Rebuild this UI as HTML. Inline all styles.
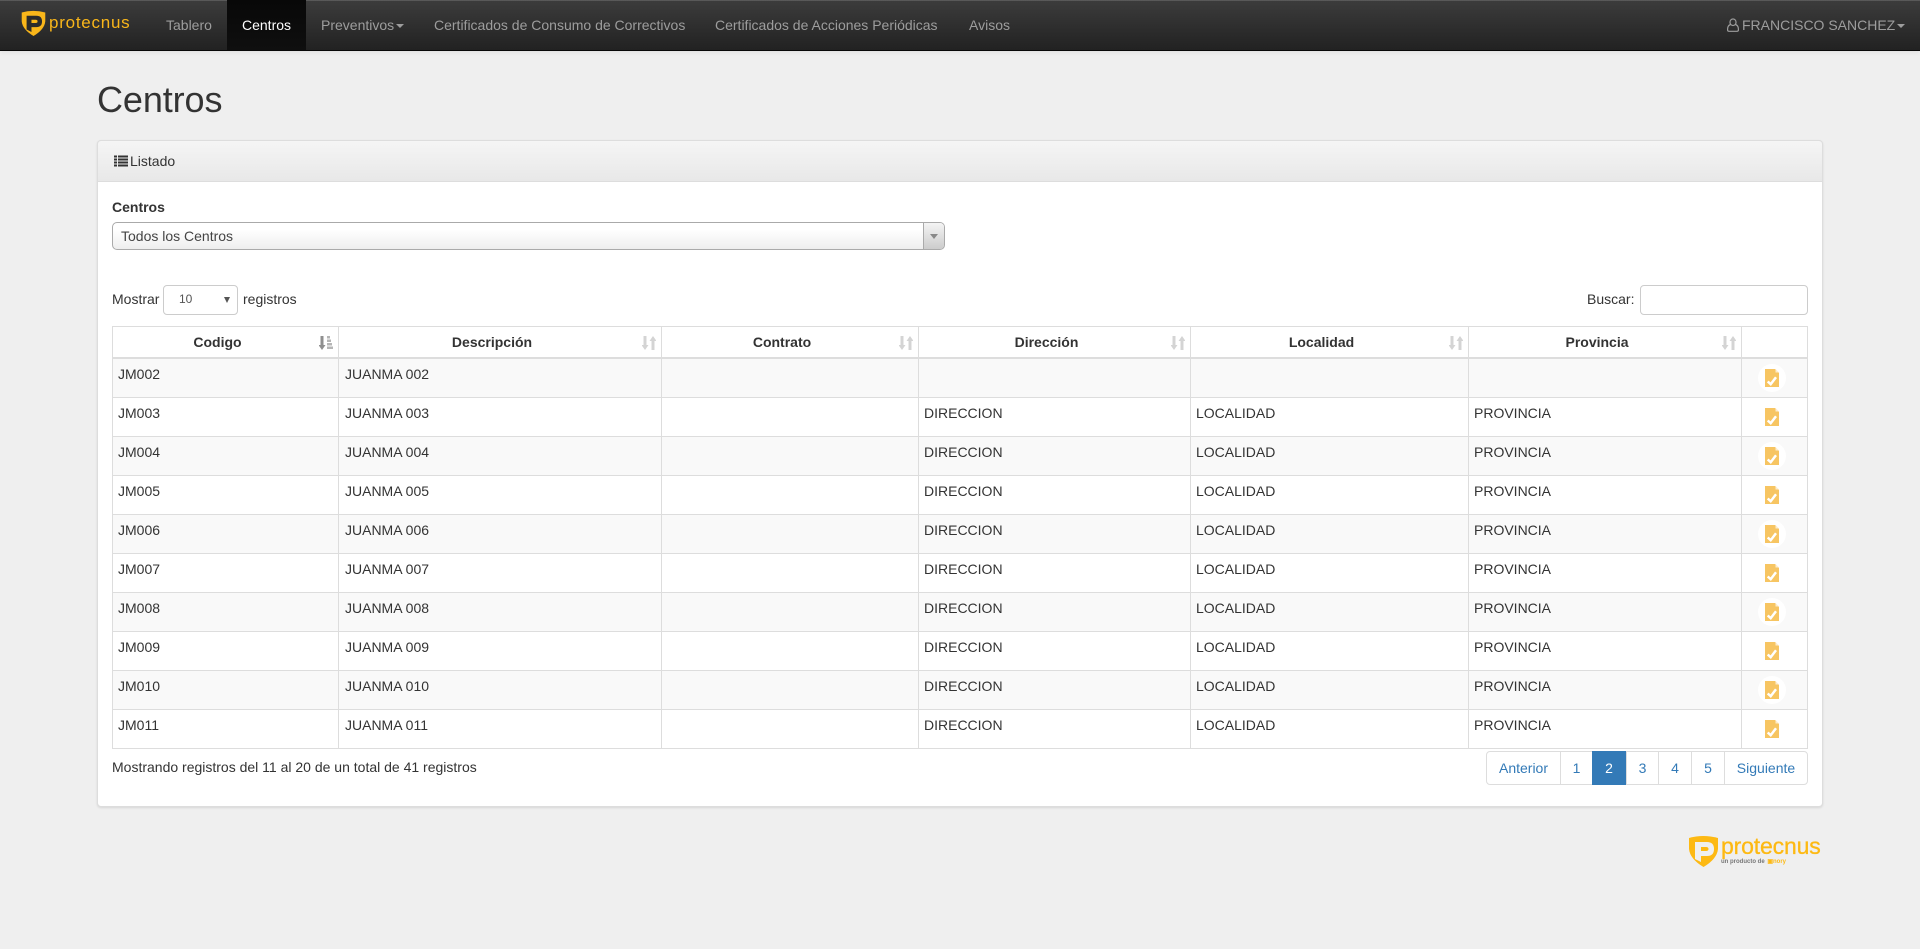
<!DOCTYPE html>
<html lang="es"><head><meta charset="utf-8"><title>Centros</title>
<style>
*{box-sizing:border-box}
html,body{margin:0;padding:0}
body{width:1920px;height:949px;overflow:hidden;background:#efefef;font:14px/20px "Liberation Sans",sans-serif;color:#333;position:relative}
.abs{position:absolute}
nav{position:absolute;left:0;top:0;width:1920px;height:51px;background:linear-gradient(#3c3c3c,#222);border-bottom:1px solid #080808;box-shadow:inset 0 1px 0 rgba(255,255,255,.15),0 1px 5px rgba(0,0,0,.075)}
nav span.i{position:absolute;top:15px;color:#9d9d9d;white-space:nowrap}
.active{position:absolute;left:227px;top:0;width:79px;height:50px;background:linear-gradient(#080808,#0f0f0f)}
.caret{position:absolute;width:0;height:0;border-top:4px solid #9d9d9d;border-left:4px solid transparent;border-right:4px solid transparent}
.brand{position:absolute;font-family:"Liberation Sans",sans-serif;color:#f9b61a;white-space:nowrap}
h1{position:absolute;left:97px;top:80px;margin:0;font-size:36px;line-height:40px;font-weight:500;color:#333;letter-spacing:-.1px}
.panel{position:absolute;left:97px;top:140px;width:1726px;height:667px;background:#fff;border:1px solid #ddd;border-radius:4px;box-shadow:0 1px 2px rgba(0,0,0,.1)}
.ph{position:absolute;left:97px;top:140px;width:1726px;height:42px;background:linear-gradient(#f5f5f5,#e8e8e8);border:1px solid #ddd;border-radius:4px 4px 0 0}
.chosen{position:absolute;left:112px;top:222px;width:833px;height:28px;border:1px solid #aaa;border-radius:5px;background:linear-gradient(#fff 25%,#eee);padding:3px 0 0 8px;color:#444}
.chosen i{position:absolute;right:0;top:0;width:21px;height:26px;border-left:1px solid #aaa;background:linear-gradient(#f4f4f4,#ccc);border-radius:0 4px 4px 0}
.chosen i:after{content:"";position:absolute;left:6px;top:11px;border-top:5px solid #888;border-left:4px solid transparent;border-right:4px solid transparent}
.box{position:absolute;height:30px;background:#fff;border:1px solid #ccc;border-radius:4px}
table{position:absolute;left:112px;top:326px;width:1695px;table-layout:fixed;border-collapse:collapse;background:#fff}
th,td{border:1px solid #ddd;padding:5px;vertical-align:top;text-align:left}
th{position:relative;height:31px;font-weight:700;text-align:center;padding:5px 21px 5px 5px;border-bottom:2px solid #ddd;line-height:20px}
td{height:39px}
td:nth-child(2){padding-left:6px}
tr:nth-child(odd) td{background:#f9f9f9}
th svg{position:absolute;right:5px;top:9px}
td .c{display:block;width:28px;height:28px;border-radius:50%;background:#fff;margin:0 0 0 11px;position:relative}
td .c svg{position:absolute;left:7px;top:5px}
.pg{position:absolute;top:751px;height:34px;border:1px solid #ddd;background:#fff;color:#337ab7;text-align:center;line-height:32px}
.pg.on{background:#337ab7;border-color:#337ab7;color:#fff}
</style></head><body>

<nav>
<div class="active"></div>
<svg class="abs" style="left:21px;top:10px" width="25" height="26" viewBox="0 0 29 32"><path fill="#f9b61a" d="M0 3Q14-1 29 3V14Q28 24 14.5 32 1 24 0 14Z"/><path fill="#2b2b2b" d="M6 7H18Q25 7 25 14 25 21 18 21H12V27L6 24Z"/><path fill="#f9b61a" d="M12 12H17Q19.500 12 19.500 14 19.500 16 17 16H12Z"/></svg>
<span class="brand" style="left:49px;top:12px;font-size:17px;line-height:22px;letter-spacing:.75px">protecnus</span>
<span class="i" style="left:166px">Tablero</span>
<span class="i" style="left:242px;color:#fff">Centros</span>
<span class="i" style="left:321px">Preventivos</span><div class="caret" style="left:396px;top:24px"></div>
<span class="i" style="left:434px">Certificados de Consumo de Correctivos</span>
<span class="i" style="left:715px">Certificados de Acciones Periódicas</span>
<span class="i" style="left:969px">Avisos</span>
<svg class="abs" style="left:1727px;top:18px" width="12" height="14" viewBox="0 0 12 14" fill="none" stroke="#9d9d9d" stroke-width="1.2"><rect x="3" y="1" width="6" height="6.500" rx="3"/><path d="M3.500 6.500Q.6 7.500.6 11V12Q.6 13.300 2 13.300H10Q11.400 13.300 11.400 12V11Q11.400 7.500 8.500 6.500"/></svg>
<span class="i" style="left:1742px">FRANCISCO SANCHEZ</span><div class="caret" style="left:1897px;top:24px"></div>
</nav>

<h1>Centros</h1>

<div class="panel"></div>
<div class="ph"></div>
<svg class="abs" style="left:114px;top:155px" width="14" height="12" viewBox="0 0 14 12" fill="#333"><path d="M0 1h3v2H0zM4 1h10v2H4zM0 4h3v2H0zM4 4h10v2H4zM0 7h3v2H0zM4 7h10v2H4zM0 10h3v2H0zM4 10h10v2H4z" transform="translate(0 -.5)"/></svg>
<div class="abs" style="left:130px;top:151px">Listado</div>

<div class="abs" style="left:112px;top:197px;font-weight:700">Centros</div>
<div class="chosen">Todos los Centros<i></i></div>

<div class="abs" style="left:112px;top:289px">Mostrar</div>
<div class="box" style="left:163px;top:285px;width:75px"></div>
<div class="abs" style="left:179px;top:289px;font-size:12px;color:#555">10</div>
<div class="abs" style="left:224px;top:297px;border-top:6px solid #555;border-left:3px solid transparent;border-right:3px solid transparent"></div>
<div class="abs" style="left:243px;top:289px">registros</div>
<div class="abs" style="left:1587px;top:289px">Buscar:</div>
<div class="box" style="left:1640px;top:285px;width:168px"></div>

<svg width="0" height="0" style="position:absolute"><defs>
<symbol id="s" viewBox="0 0 14 14"><path d="M1.500 0H4.500V9H6.500L3 14-.5 9H1.500Z"/><path d="M11 0L14.500 5H12.500V14H9.500V5H7.500Z"/></symbol>
<symbol id="a" viewBox="0 0 14 14"><path fill="#8f8f8f" d="M1.500 0H4.500V9H6.500L3 14-.5 9H1.500Z"/><path fill="#b5b5b5" d="M8 0h3v2.500H8zM8 3.500h4v2.500H8zM8 7h5v2.500H8zM8 10.500h6V13H8z"/></symbol>
<symbol id="d" viewBox="0 0 14 18"><path fill="#f7c562" d="M0 0H10L14 4V18H0Z"/><path fill="#fdeccb" d="M10.500 0L14 3.500H10.500Z"/><path fill="none" stroke="#fff" stroke-width="2.500" d="M2.700 12.500L5.700 15.200 11 8.300"/></symbol>
</defs></svg>

<table>
<colgroup><col style="width:226px"><col style="width:323px"><col style="width:257px"><col style="width:272px"><col style="width:278px"><col style="width:273px"><col style="width:66px"></colgroup>
<thead><tr>
<th>Codigo<svg width="14" height="14"><use href="#a"/></svg></th>
<th>Descripción<svg width="14" height="14" fill="#d4d4d4"><use href="#s"/></svg></th>
<th>Contrato<svg width="14" height="14" fill="#d4d4d4"><use href="#s"/></svg></th>
<th>Dirección<svg width="14" height="14" fill="#d4d4d4"><use href="#s"/></svg></th>
<th>Localidad<svg width="14" height="14" fill="#d4d4d4"><use href="#s"/></svg></th>
<th>Provincia<svg width="14" height="14" fill="#d4d4d4"><use href="#s"/></svg></th>
<th></th>
</tr></thead>
<tbody>
<tr><td>JM002</td><td>JUANMA 002</td><td></td><td></td><td></td><td></td><td><span class="c"><svg width="14" height="18"><use href="#d"/></svg></span></td></tr>
<tr><td>JM003</td><td>JUANMA 003</td><td></td><td>DIRECCION</td><td>LOCALIDAD</td><td>PROVINCIA</td><td><span class="c"><svg width="14" height="18"><use href="#d"/></svg></span></td></tr>
<tr><td>JM004</td><td>JUANMA 004</td><td></td><td>DIRECCION</td><td>LOCALIDAD</td><td>PROVINCIA</td><td><span class="c"><svg width="14" height="18"><use href="#d"/></svg></span></td></tr>
<tr><td>JM005</td><td>JUANMA 005</td><td></td><td>DIRECCION</td><td>LOCALIDAD</td><td>PROVINCIA</td><td><span class="c"><svg width="14" height="18"><use href="#d"/></svg></span></td></tr>
<tr><td>JM006</td><td>JUANMA 006</td><td></td><td>DIRECCION</td><td>LOCALIDAD</td><td>PROVINCIA</td><td><span class="c"><svg width="14" height="18"><use href="#d"/></svg></span></td></tr>
<tr><td>JM007</td><td>JUANMA 007</td><td></td><td>DIRECCION</td><td>LOCALIDAD</td><td>PROVINCIA</td><td><span class="c"><svg width="14" height="18"><use href="#d"/></svg></span></td></tr>
<tr><td>JM008</td><td>JUANMA 008</td><td></td><td>DIRECCION</td><td>LOCALIDAD</td><td>PROVINCIA</td><td><span class="c"><svg width="14" height="18"><use href="#d"/></svg></span></td></tr>
<tr><td>JM009</td><td>JUANMA 009</td><td></td><td>DIRECCION</td><td>LOCALIDAD</td><td>PROVINCIA</td><td><span class="c"><svg width="14" height="18"><use href="#d"/></svg></span></td></tr>
<tr><td>JM010</td><td>JUANMA 010</td><td></td><td>DIRECCION</td><td>LOCALIDAD</td><td>PROVINCIA</td><td><span class="c"><svg width="14" height="18"><use href="#d"/></svg></span></td></tr>
<tr><td>JM011</td><td>JUANMA 011</td><td></td><td>DIRECCION</td><td>LOCALIDAD</td><td>PROVINCIA</td><td><span class="c"><svg width="14" height="18"><use href="#d"/></svg></span></td></tr>
</tbody></table>

<div class="abs" style="left:112px;top:757px">Mostrando registros del 11 al 20 de un total de 41 registros</div>

<div class="pg" style="left:1486px;width:75px;border-radius:4px 0 0 4px">Anterior</div>
<div class="pg" style="left:1560px;width:33px">1</div>
<div class="pg on" style="left:1592px;width:34px">2</div>
<div class="pg" style="left:1626px;width:33px">3</div>
<div class="pg" style="left:1658px;width:34px">4</div>
<div class="pg" style="left:1691px;width:34px">5</div>
<div class="pg" style="left:1724px;width:84px;border-radius:0 4px 4px 0">Siguiente</div>

<svg class="abs" style="left:1689px;top:835px" width="29" height="32" viewBox="0 0 29 32"><path fill="#fdb913" d="M0 3Q14-1 29 3V14Q28 24 14.5 32 1 24 0 14Z"/><path fill="#efefef" d="M6 7H18Q25 7 25 14 25 21 18 21H12V27L6 24Z"/><path fill="#fdb913" d="M12 12H17Q19.500 12 19.500 14 19.500 16 17 16H12Z"/></svg>
<span class="brand" style="left:1721px;top:833px;font-size:23px;line-height:26px;letter-spacing:-.15px;color:#fdb913;-webkit-text-stroke:.3px #fdb913">protecnus</span>
<span class="abs" style="left:1721px;top:858px;font-size:6px;line-height:8px;color:#777;font-weight:700;white-space:nowrap">un producto de <span style="color:#fdb913;margin-left:1px">▣nory</span></span>

</body></html>
